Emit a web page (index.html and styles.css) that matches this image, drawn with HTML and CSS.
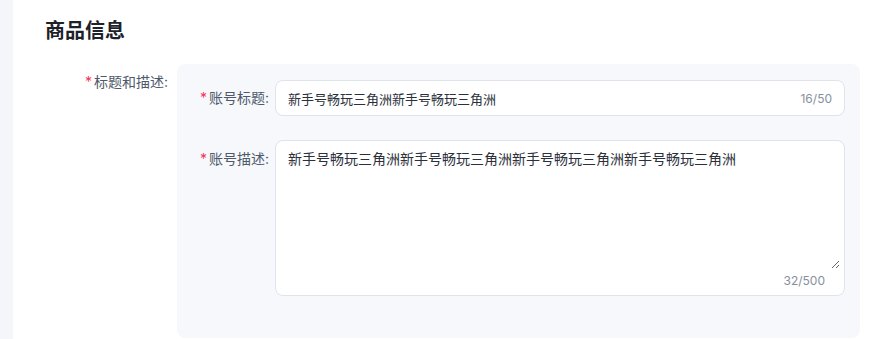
FILE: index.html
```html
<!DOCTYPE html>
<html lang="zh-CN">
<head>
    <meta charset="UTF-8">
    <meta name="viewport" content="width=device-width, initial-scale=1.0">
    <title>商品信息</title>
    <link rel="stylesheet" href="styles.css">
</head>
<body>

    <div class="page">
        <div class="card">
            <h2 class="card-title">商品信息</h2>

            <div class="form-row">
                <label class="form-label"><span class="req">*</span>标题和描述:</label>

                <div class="group">
                    <div class="field">
                        <label class="field-label" for="title"><span class="req">*</span>账号标题:</label>
                        <div class="input-wrap">
                            <input type="text" id="title" value="新手号畅玩三角洲新手号畅玩三角洲">
                            <span class="count">16/50</span>
                        </div>
                    </div>

                    <div class="field field-top">
                        <label class="field-label" for="desc"><span class="req">*</span>账号描述:</label>
                        <div class="textarea-wrap">
                            <textarea id="desc">新手号畅玩三角洲新手号畅玩三角洲新手号畅玩三角洲新手号畅玩三角洲</textarea>
                            <div class="count count-bottom">32/500</div>
                        </div>
                    </div>
                </div>
            </div>
        </div>
    </div>

</body>
</html>
```

FILE: styles.css
```css
/* General Styles */
body {
    margin: 0;
    background: #f5f6fa;
    font-family: 'Inter', 'Noto Sans CJK SC', sans-serif;
    color: #1d2129;
}

.page {
    padding-left: 13px;
    height: 339px;
    overflow: hidden;
}

.card {
    background: #ffffff;
    height: 100%;
    padding: 17px 19px 0 32px;
    box-sizing: border-box;
}

.card-title {
    margin: 0 0 19px;
    font-size: 20px;
    line-height: 28px;
    font-weight: 700;
    color: #1d2129;
}

/* Form */
.form-row {
    display: flex;
}

.form-label {
    width: 132px;
    flex-shrink: 0;
    box-sizing: border-box;
    padding-right: 9px;
    margin-top: 8px;
    text-align: right;
    font-size: 14px;
    line-height: 20px;
    color: #4e5969;
}

.req {
    color: #f5315a;
    margin-right: 2px;
}

.group {
    flex: 1;
    background: #f7f8fc;
    border-radius: 8px;
    padding: 16px 15px 42px 0;
}

.field {
    display: flex;
}

.field-top {
    margin-top: 24px;
}

.field-label {
    width: 98px;
    flex-shrink: 0;
    box-sizing: border-box;
    padding-right: 6px;
    text-align: right;
    font-size: 14px;
    line-height: 36px;
    color: #4e5969;
}

.field-top .field-label {
    line-height: 20px;
    padding-top: 9px;
}

.input-wrap {
    flex: 1;
    display: flex;
    align-items: center;
    height: 36px;
    box-sizing: border-box;
    background: #ffffff;
    border: 1px solid #dfe3ec;
    border-radius: 8px;
    padding: 0 12px;
}

.input-wrap input {
    flex: 1;
    border: none;
    outline: none;
    padding: 0;
    font-family: inherit;
    font-size: 13px;
    color: #2b303b;
    background: transparent;
}

.count {
    font-size: 12px;
    color: #86909c;
}

.textarea-wrap {
    flex: 1;
    height: 156px;
    box-sizing: border-box;
    background: #ffffff;
    border: 1px solid #dfe3ec;
    border-radius: 8px;
    display: flex;
    flex-direction: column;
}

.textarea-wrap textarea {
    display: block;
    height: 128px;
    margin-right: 4px;
    box-sizing: border-box;
    border: none;
    outline: none;
    resize: vertical;
    padding: 7px 12px;
    font-family: inherit;
    font-size: 14px;
    line-height: 22px;
    color: #2b303b;
    background: transparent;
}

.count-bottom {
    text-align: right;
    padding-right: 19px;
    line-height: 24px;
}
```
